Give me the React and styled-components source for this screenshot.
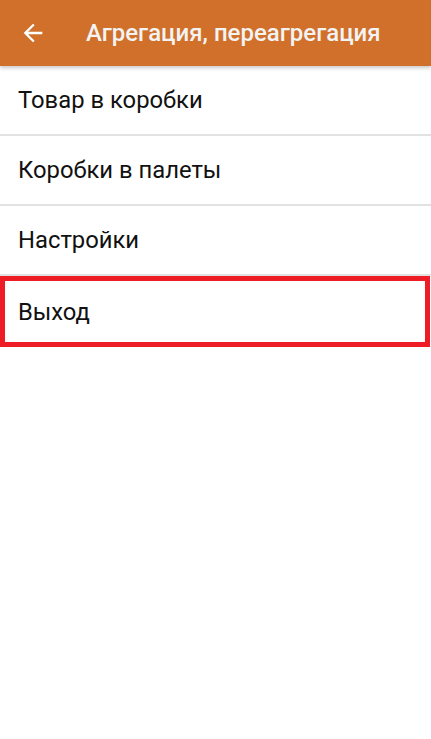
import React from "react";
import styled, { createGlobalStyle } from "styled-components";

const Global = createGlobalStyle`
  html, body { margin: 0; padding: 0; background: #ffffff; }
  body { font-family: Roboto, "Noto Sans", sans-serif; }
  * { box-sizing: border-box; }
`;

const Screen = styled.div`
  width: 431px;
  min-height: 739px;
  background: #ffffff;
  display: flex;
  flex-direction: column;
`;

const AppBar = styled.header`
  height: 66px;
  flex-shrink: 0;
  background: #d0702a;
  display: flex;
  align-items: center;
  padding-left: 18px;
  box-shadow: 0 2px 4px rgba(0, 0, 0, 0.22);
  position: relative;
  z-index: 1;
`;

const BackButton = styled.div`
  width: 29px;
  height: 29px;
  display: flex;
  align-items: center;
  justify-content: center;
`;

const Title = styled.h1`
  margin: 0 0 0 39px;
  font-family: Roboto, sans-serif;
  font-weight: 500;
  font-size: 24px;
  color: #f3f3f3;
`;

const Menu = styled.ul`
  list-style: none;
  margin: 0;
  padding: 0;
  display: flex;
  flex-direction: column;
`;

const Item = styled.li`
  height: ${(p) => (p.$highlighted ? "71px" : "68px")};
  flex-shrink: 0;
  display: flex;
  align-items: center;
  padding-left: ${(p) => (p.$highlighted ? "13px" : "18px")};
  font-family: Roboto, sans-serif;
  font-size: 23.8px;
  color: #111111;
  border: ${(p) => (p.$highlighted ? "5px solid #ee1c25" : "none")};
  margin-right: ${(p) => (p.$highlighted ? "1px" : "0")};
`;

const Divider = styled.li`
  height: 2px;
  flex-shrink: 0;
  background: #e2e2e2;
`;

const items = ["Товар в коробки", "Коробки в палеты", "Настройки"];

export default function App() {
  return (
    <>
      <Global />
      <Screen>
        <AppBar>
          <BackButton>
            <svg width="28" height="28" viewBox="0 0 24 24" fill="#ffffff">
              <path d="M20 11H7.83l5.59-5.59L12 4l-8 8 8 8 1.41-1.41L7.83 13H20v-2z" />
            </svg>
          </BackButton>
          <Title>Агрегация, переагрегация</Title>
        </AppBar>
        <Menu>
          {items.map((t) => (
            <React.Fragment key={t}>
              <Item>{t}</Item>
              <Divider />
            </React.Fragment>
          ))}
          <Item $highlighted>Выход</Item>
        </Menu>
      </Screen>
    </>
  );
}
